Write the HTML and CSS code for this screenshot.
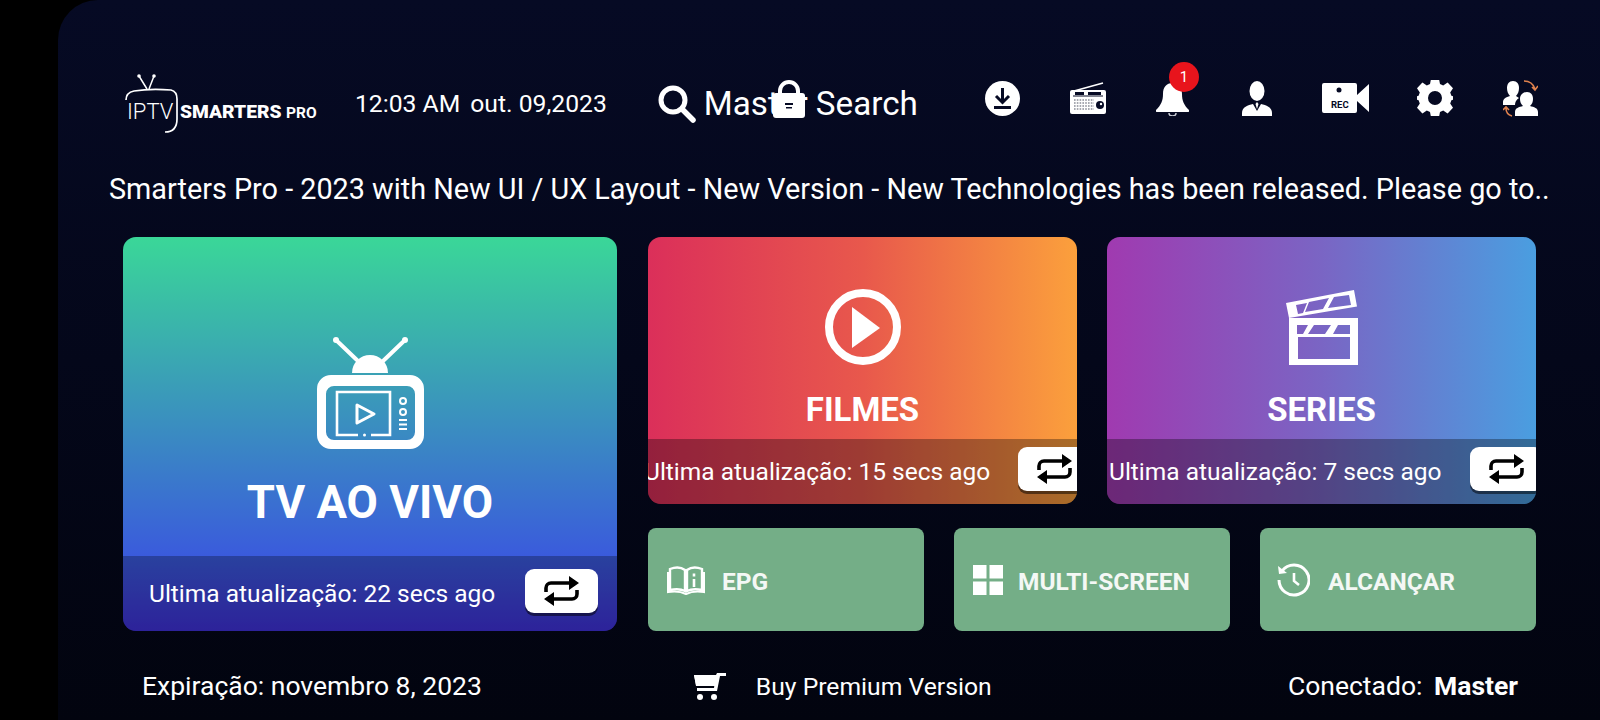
FILE: index.html

```html
<!DOCTYPE html>
<html lang="pt-br">
<head>
    <meta charset="UTF-8">
    <title>IPTV Smarters Pro</title>
    <link rel="stylesheet" href="styles.css">
</head>
<body>

<svg class="defs" width="0" height="0">
    <symbol id="repeat" viewBox="0 0 35 30">
        <path d="M2 16v-4a5 5 0 0 1 5-5h20M33 14v4a5 5 0 0 1-5 5H8" fill="none" stroke="#000" stroke-width="3.6"/>
        <path d="M25 0l10 7-10 7zM10 16L0 23l10 7z" fill="#000"/>
    </symbol>
</svg>

<div class="screen">
    <header class="topbar">
        <svg class="logo" width="200" height="60" viewBox="0 0 200 60">
            <path d="M18 3l8 13M33 3l-5 13" stroke="#fff" stroke-width="1.5" fill="none"/>
            <circle cx="18" cy="3" r="1.8" fill="#fff"/>
            <circle cx="33" cy="3" r="1.8" fill="#fff"/>
            <path d="M5 27c0-6 3-8 8-9 12-2 25-2 37-1 4 1 6 4 6 9v20c0 8-3 13-12 13" fill="none" stroke="#fff" stroke-width="1.7"/>
            <text class="logo-iptv" x="6" y="46">IPTV</text>
            <text class="logo-name" x="59" y="45">SMARTERS</text>
            <text class="logo-pro" x="165" y="45">PRO</text>
        </svg>
        <span class="clock">12:03 AM</span>
        <span class="clock date">out. 09,2023</span>

        <div class="search">
            <svg width="38" height="38" viewBox="0 0 38 38">
                <circle cx="15" cy="15" r="12" fill="none" stroke="#fff" stroke-width="5"/>
                <path d="M24 24l11 11" stroke="#fff" stroke-width="5.5" stroke-linecap="round"/>
            </svg>
            <span class="search-text">Master Search</span>
            <svg class="lock" width="32" height="38" viewBox="0 0 32 38">
                <path d="M7 15V11a9 9 0 0 1 18 0v4" fill="none" stroke="#fff" stroke-width="4"/>
                <rect x="0" y="13" width="32" height="25" rx="3" fill="#fff"/>
                <rect x="12" y="23" width="8" height="2" fill="#060a24"/>
                <rect x="13" y="27" width="6" height="1.5" fill="#060a24"/>
            </svg>
        </div>

        <div class="icons">
            <svg width="35" height="35" viewBox="0 0 35 35">
                <circle cx="17.5" cy="17.5" r="17.5" fill="#fff"/>
                <path d="M17.5 7v14M11 15l6.500 6.500L24 15" fill="none" stroke="#060a24" stroke-width="3"/>
                <path d="M9 26.500h17" stroke="#060a24" stroke-width="3"/>
            </svg>
            <svg width="36" height="32" viewBox="0 0 36 32">
                <path d="M4 9L33 1" stroke="#fff" stroke-width="1.6"/>
                <rect x="0" y="8" width="36" height="24" rx="2" fill="#fff"/>
                <path d="M3 14h30" stroke="#060a24" stroke-width="1"/>
                <rect x="5" y="10" width="9" height="3" fill="#060a24"/>
                <rect x="18" y="10" width="13" height="3" fill="#060a24"/>
                <path d="M4 18h20M4 21h20M4 24h20M4 27h20" stroke="#8a8d98" stroke-width="1.6" stroke-dasharray="1.600 1.200"/>
                <circle cx="30" cy="23" r="4" fill="#060a24"/>
                <circle cx="31" cy="22" r="1.200" fill="#fff"/>
            </svg>
            <div class="bell">
                <svg width="33" height="33" viewBox="0 0 33 33">
                    <path d="M16.500 0c6 0 9.500 4 9.500 11 0 7 2 11 7 16 .5 1 0 2-1 2H1c-1 0-1.500-1-1-2 5-5 7-9 7-16C7 4 10.500 0 16.500 0z" fill="#fff"/>
                    <path d="M13 30a3.500 3 0 0 0 7 0" fill="none" stroke="#c9ccd4" stroke-width="1.500"/>
                </svg>
                <span class="badge">1</span>
            </div>
            <svg class="icon-person" width="30" height="35" viewBox="0 0 30 35">
                <ellipse cx="15" cy="10" rx="7.500" ry="10" fill="#fff"/>
                <path d="M0 35v-3c0-6 6-8 11-9l4 7 4-7c5 1 11 3 11 9v3z" fill="#fff"/>
                <path d="M15 21l-1.500 2 1.500 5 1.500-5z" fill="#fff"/>
            </svg>
            <svg class="icon-rec" width="48" height="30" viewBox="0 0 48 30">
                <path d="M2 0h31a2 2 0 0 1 2 2v26a2 2 0 0 1-2 2H2a2 2 0 0 1-2-2V2a2 2 0 0 1 2-2zM35 12L47 1v28L35 18z" fill="#fff"/>
                <circle cx="17" cy="7" r="2.500" fill="#060a24"/>
                <text class="rec" x="9" y="25">REC</text>
            </svg>
            <svg width="36" height="36" viewBox="3 3 18 18">
                <path fill="#fff" fill-rule="evenodd" d="M10 3h4l.5 2.500 1.600.7L18.300 4.800 21 7.600l-1.400 2.200.6 1.600L22 12v1l-1.800.6-.6 1.600 1.400 2.200-2.700 2.800-2.200-1.400-1.600.7L14 22h-4l-.5-2.500-1.600-.7-2.200 1.400L3 17.400l1.400-2.200-.6-1.600L2 13v-1l1.800-.6.600-1.600L3 7.600l2.700-2.800 2.200 1.400 1.600-.7zM12 9a3.500 3.500 0 1 0 0 7 3.500 3.500 0 0 0 0-7z" transform="translate(0 -.5)"/>
            </svg>
            <svg width="35" height="37" viewBox="0 0 35 37">
                <path d="M10 1c4 0 6 3 6 7 0 3-1 6-3 8 1 1 2 1 3 2-3 2-4 4-4 7H0v-3c0-3 3-5 7-6-2-2-3-5-3-8 0-4 2-7 6-7z" fill="#fff"/>
                <path d="M24 12c4 0 6 3 6 7 0 3-1 5-3 7 4 1 8 2 8 6v4H12v-4c0-4 4-5 8-6-2-2-3-4-3-7 0-4 3-7 7-7z" fill="#fff"/>
                <path d="M21 1c5 0 9 2 11 8M29 7l3 3 3-4" fill="none" stroke="#e0824e" stroke-width="1.600"/>
                <path d="M9 36c-4-1-6-3-6-8M0 30l3-3 3 3" fill="none" stroke="#e0824e" stroke-width="1.600"/>
            </svg>
        </div>
    </header>

    <div class="ticker">Smarters Pro - 2023 with New UI / UX Layout - New Version - New Technologies has been released. Please go to..</div>

    <main class="dashboard">
        <section class="card card-tv">
            <div class="card-body">
                <svg class="tv-icon" width="107" height="112" viewBox="0 0 107 112">
                    <path d="M19 3l23 22M88 3L65 25" stroke="#fff" stroke-width="4" stroke-linecap="round"/>
                    <circle cx="19" cy="3" r="3" fill="#fff"/>
                    <circle cx="88" cy="3" r="3" fill="#fff"/>
                    <path d="M35 36a18 18 0 0 1 36 0z" fill="#fff"/>
                    <path fill="#fff" fill-rule="evenodd" d="M14 38h79a14 14 0 0 1 14 14v46a14 14 0 0 1-14 14H14A14 14 0 0 1 0 98V52a14 14 0 0 1 14-14zM17 49a8 8 0 0 0-8 8v38a8 8 0 0 0 8 8h73a8 8 0 0 0 8-8V57a8 8 0 0 0-8-8z"/>
                    <path d="M41 98H20V55h53v43H54" fill="none" stroke="#fff" stroke-width="2.600"/>
                    <circle cx="47.500" cy="98" r="1.500" fill="#fff"/>
                    <path d="M40 68l17 9-17 9z" fill="none" stroke="#fff" stroke-width="3" stroke-linejoin="round"/>
                    <circle cx="86" cy="64" r="3" fill="none" stroke="#fff" stroke-width="2"/>
                    <circle cx="86" cy="75" r="3" fill="none" stroke="#fff" stroke-width="2"/>
                    <path d="M82 83h8M82 87.500h8M82 92h8" stroke="#fff" stroke-width="1.800"/>
                </svg>
                <h2 class="card-title title-big">TV AO VIVO</h2>
            </div>
            <div class="card-bar bar-tv">
                <span>Ultima atualização: 22 secs ago</span>
                <button class="refresh"><svg width="35" height="30"><use href="#repeat"/></svg></button>
            </div>
        </section>

        <div class="side">
            <div class="side-top">
                <section class="card card-movies">
                    <div class="card-body">
                        <svg width="76" height="76" viewBox="0 0 76 76">
                            <circle cx="38" cy="38" r="34" fill="none" stroke="#fff" stroke-width="8"/>
                            <path d="M27 18l28 21-28 20z" fill="#fff"/>
                        </svg>
                        <h2 class="card-title">FILMES</h2>
                    </div>
                    <div class="card-bar bar-clipped">
                        <span>Ultima atualização: 15 secs ago</span>
                        <button class="refresh"><svg width="35" height="30"><use href="#repeat"/></svg></button>
                    </div>
                </section>

                <section class="card card-series">
                    <div class="card-body">
                        <svg width="72" height="76" viewBox="0 0 72 76">
                            <path fill="#fff" fill-rule="evenodd" d="M0 14L68 1l3 16.500L3 29zM10 16l11-2-4 10-5 1zM23 13l20-4-6 11-18 3zM48 8l15-2 2 10-23 3z"/>
                            <path fill="#fff" fill-rule="evenodd" d="M3 29h69v47H3zM11 36h11l-5 9h-6zM28 36h17l-6 9H22zM52 36h12v9H47zM12 48v22h52V48z"/>
                        </svg>
                        <h2 class="card-title">SERIES</h2>
                    </div>
                    <div class="card-bar">
                        <span>Ultima atualização: 7 secs ago</span>
                        <button class="refresh"><svg width="35" height="30"><use href="#repeat"/></svg></button>
                    </div>
                </section>
            </div>

            <div class="side-bottom">
                <a class="tile">
                    <svg width="38" height="30" viewBox="0 0 38 30">
                        <path d="M3 4c5-2 11-2 15 1v21c-4-2-10-2-15-1zM35 4c-5-2-11-2-15 1v21c4-2 10-2 15-1z" fill="none" stroke="#fff" stroke-width="2.400"/>
                        <path d="M1 7v20c6-1 12-1 18 2 6-3 12-3 18-2V7" fill="none" stroke="#fff" stroke-width="2"/>
                        <path d="M27 8.500v3M27 14v8" stroke="#fff" stroke-width="2.600"/>
                    </svg>
                    <span>EPG</span>
                </a>
                <a class="tile tile-multi">
                    <svg width="30" height="30" viewBox="0 0 30 30">
                        <path d="M0 0h13.500v13.500H0zM16.500 0H30v13.500H16.500zM0 16.500h13.500V30H0zM16.500 16.500H30V30H16.500z" fill="#fff"/>
                    </svg>
                    <span>MULTI-SCREEN</span>
                </a>
                <a class="tile tile-catchup">
                    <svg width="33" height="34" viewBox="0 0 33 34">
                        <path d="M5 8a15 15 0 1 1-3 9" fill="none" stroke="#fff" stroke-width="3"/>
                        <path d="M1 3l1 8 8-1z" fill="#fff"/>
                        <path d="M17 10v8l5 4" fill="none" stroke="#fff" stroke-width="2.600"/>
                    </svg>
                    <span>ALCANÇAR</span>
                </a>
            </div>
        </div>
    </main>

    <footer class="bottom">
        <span class="expiry">Expiração: novembro 8, 2023</span>
        <div class="buy">
            <svg width="32" height="27" viewBox="0 0 32 27">
                <path d="M0 2h22l1-2h9v3h-6l-3 15H3v-3h17l.3-2H2z" fill="#fff"/>
                <path d="M0 2h23l-2 10H2z" fill="#fff"/>
                <circle cx="6" cy="24" r="3" fill="#fff"/>
                <circle cx="20" cy="24" r="3" fill="#fff"/>
            </svg>
            <span>Buy Premium Version</span>
        </div>
        <span class="user">Conectado: <b>Master</b></span>
    </footer>
</div>

</body>
</html>
```

FILE: styles.css

```css
* {
    box-sizing: border-box;
}
body {
    margin: 0;
    height: 720px;
    overflow: hidden;
    background-color: #000;
    font-family: Roboto, Arial, sans-serif;
    color: white;
}
svg {
    display: block;
    flex: none;
}
.defs {
    position: absolute;
}
.screen {
    margin-left: 58px;
    height: 720px;
    padding-top: 70px;
    overflow: hidden;
    border-top-left-radius: 40px;
    background: linear-gradient(180deg, #060a24 0%, #04071a 50%, #02040f 100%);
}

/* top bar */
.topbar {
    display: flex;
    align-items: center;
    height: 60px;
    padding: 0 62px 0 63px;
}
.logo {
    margin-top: 6px;
}
.logo-iptv {
    font-size: 22px;
    font-weight: 300;
    fill: white;
}
.logo-name {
    font-size: 19.200px;
    font-weight: 900;
    fill: white;
}
.logo-pro {
    font-size: 15.500px;
    font-weight: 700;
    fill: white;
}
.clock {
    margin-left: 34px;
    margin-top: 6px;
    font-size: 24.700px;
    white-space: nowrap;
}
.date {
    margin-left: 10px;
}
.search {
    position: relative;
    display: flex;
    align-items: center;
    gap: 8px;
    margin-left: 51px;
    margin-top: 7px;
}
.search-text {
    font-size: 33.200px;
    white-space: nowrap;
}
.lock {
    position: absolute;
    left: 115px;
    top: -4px;
}
.icons {
    display: flex;
    align-items: center;
    gap: 50px;
    margin-left: auto;
    margin-bottom: 4px;
}
.icon-person {
    margin-left: 3px;
}
.icon-rec {
    margin-right: -3px;
}
.bell {
    position: relative;
    margin-top: 3px;
}
.badge {
    position: absolute;
    left: 13px;
    top: -21px;
    width: 30px;
    height: 30px;
    border-radius: 50%;
    background-color: #e8141c;
    font-size: 15px;
    line-height: 30px;
    text-align: center;
}
.rec {
    font-family: Roboto, Arial, sans-serif;
    font-size: 9.500px;
    font-weight: 700;
    fill: #060a24;
}

.ticker {
    height: 36px;
    margin-top: 41px;
    padding-left: 51px;
    font-size: 28.800px;
    line-height: 36px;
    white-space: nowrap;
}

/* cards */
.dashboard {
    display: grid;
    grid-template-columns: 494px 1fr;
    gap: 31px;
    height: 394px;
    margin: 30px 64px 0 65px;
}
.side {
    display: flex;
    flex-direction: column;
    gap: 24px;
}
.side-top {
    display: grid;
    grid-template-columns: 1fr 1fr;
    gap: 30px;
    height: 267px;
}
.side-bottom {
    display: grid;
    grid-template-columns: repeat(3, 1fr);
    gap: 30px;
    height: 103px;
}
.card {
    display: flex;
    flex-direction: column;
    min-width: 0;
    overflow: hidden;
    border-radius: 13px;
}
.card-tv {
    background: linear-gradient(180deg, #3ad798 0%, #3a5bdc 81%, #3f30d6 100%);
}
.card-movies {
    background: linear-gradient(90deg, #db2f5a 0%, #e8584c 50%, #fba03c 100%);
}
.card-series {
    background: linear-gradient(90deg, #a03ab0 0%, #7a65c4 50%, #4a9ee0 100%);
}
.card-body {
    flex: 1;
    display: flex;
    flex-direction: column;
    align-items: center;
    padding-top: 52px;
}
.card-tv .card-body {
    padding-top: 100px;
}
.card-title {
    margin: 25px 0 0;
    font-size: 33px;
    line-height: 40px;
    font-weight: 700;
}
.title-big {
    margin-top: 27px;
    font-size: 45.500px;
    line-height: 54px;
}
.card-bar {
    display: flex;
    flex: none;
    align-items: center;
    gap: 28px;
    height: 65px;
    padding-left: 2px;
    background-color: rgba(0, 0, 0, 0.32);
    font-size: 24.500px;
    white-space: nowrap;
}
.card-bar span {
    flex: none;
}
.bar-tv {
    height: 75px;
    padding-left: 26px;
    gap: 30px;
    background-color: rgba(0, 0, 0, 0.28);
}
.bar-clipped {
    padding-left: 0;
}
.bar-clipped span {
    margin-left: -4px;
}
.refresh {
    display: flex;
    flex: none;
    align-items: center;
    justify-content: center;
    width: 73px;
    height: 44px;
    padding: 0;
    border: none;
    border-radius: 9px;
    background-color: white;
    box-shadow: 0 3px 0 rgba(0, 0, 0, 0.5);
    margin-top: -5px;
}

/* small tiles */
.tile {
    display: flex;
    align-items: center;
    gap: 17px;
    padding-left: 19px;
    border-radius: 8px;
    background-color: #74ae87;
    font-size: 24.500px;
    font-weight: 700;
    color: #f4f8f5;
    white-space: nowrap;
}
.tile span {
    padding-top: 3px;
}
.tile-multi {
    gap: 15px;
}
.tile-catchup {
    gap: 18px;
    padding-left: 17px;
}

/* footer */
.bottom {
    display: flex;
    align-items: center;
    height: 40px;
    margin-top: 34px;
    padding: 0 82px 0 84px;
    font-size: 26.500px;
}
.buy {
    display: flex;
    align-items: center;
    gap: 30px;
    margin-left: 212px;
    margin-top: 3px;
    font-size: 24.700px;
}
.user {
    margin-left: auto;
}
.user b {
    margin-left: 5px;
    font-weight: 700;
}
```
